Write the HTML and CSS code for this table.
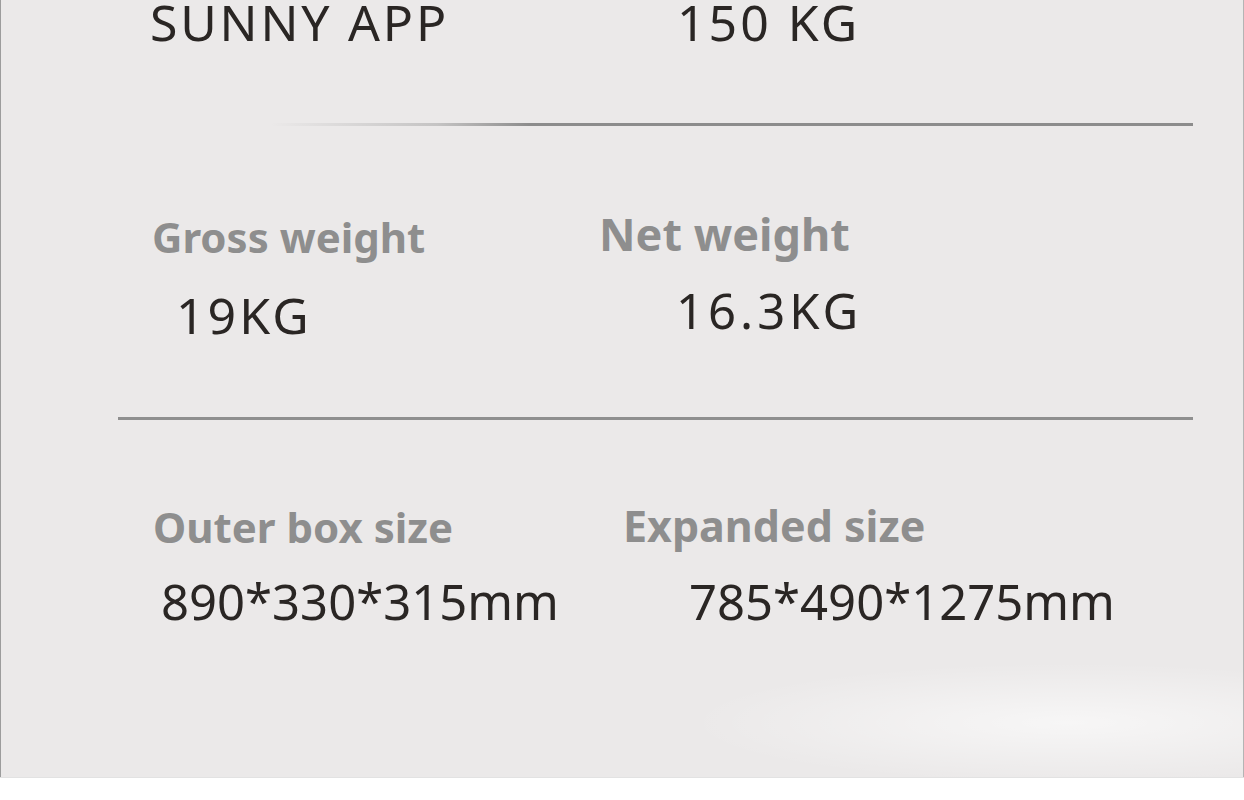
FILE: index.html
```html
<!DOCTYPE html>
<html lang="en">
<head>
    <meta charset="UTF-8">
    <meta name="viewport" content="width=device-width, initial-scale=1.0">
    <title>Sunny App - Specs</title>
    <link rel="stylesheet" href="styles.css">
</head>
<body>

    <div class="poster">
        <!-- brand / load -->
        <section class="row row-top">
            <div class="cell">
                <div class="value brand">SUNNY APP</div>
            </div>
            <div class="cell">
                <div class="value load">150 KG</div>
            </div>
        </section>

        <div class="rule rule-fade"></div>

        <!-- weights -->
        <section class="row row-weight">
            <div class="cell">
                <div class="label gross">Gross weight</div>
                <div class="value gross-val">19KG</div>
            </div>
            <div class="cell">
                <div class="label net">Net weight</div>
                <div class="value net-val">16.3KG</div>
            </div>
        </section>

        <div class="rule rule-full"></div>

        <!-- sizes -->
        <section class="row row-size">
            <div class="cell">
                <div class="label outer">Outer box size</div>
                <div class="value outer-val">890*330*315mm</div>
            </div>
            <div class="cell">
                <div class="label expanded">Expanded size</div>
                <div class="value expanded-val">785*490*1275mm</div>
            </div>
        </section>
    </div>
    <div class="footer"></div>

</body>
</html>
```

FILE: styles.css
```css
body {
    margin: 0;
    background: #ffffff;
    font-family: "Noto Sans", "Open Sans", sans-serif;
    overflow: hidden;
}

.poster {
    height: 777px;
    box-sizing: border-box;
    border-left: 1px solid #9c9c9c;
    border-right: 1px solid #b4b4b4;
    background:
        radial-gradient(ellipse 380px 60px at 86% 93%, rgba(255, 255, 255, 0.6), rgba(255, 255, 255, 0) 100%),
        #ebe9e9;
    overflow: hidden;
}

.footer {
    height: 23px;
    background: #ffffff;
    border-top: 1px solid #e2e2e2;
}

/* filas de dos columnas */
.row {
    display: grid;
    grid-template-columns: 448px 1fr;
    padding-left: 147px;
    align-items: start;
}
.row-weight { margin-top: 85px; }
.row-size { margin-top: 85px; }

.label {
    font-weight: 700;
    color: #8e8e8e;
    font-size: 42px;
    line-height: 1;
}
.value {
    color: #2a2624;
    font-size: 49px;
    line-height: 1;
}

.brand { font-size: 50px; line-height: 0.9; letter-spacing: 2.8px; margin-left: 2px; }
.load { font-size: 50px; line-height: 0.9; letter-spacing: 3px; margin-left: 81px; }

.gross { margin-top: 5px; margin-left: 4px; }
.gross-val { font-size: 50px; letter-spacing: 3px; margin-top: 32px; margin-left: 28px; }
.net { font-size: 45px; margin-left: 3px; }
.net-val { letter-spacing: 4px; margin-top: 30px; margin-left: 80px; }

.outer { margin-top: 1px; margin-left: 5px; }
.outer-val { margin-top: 29px; margin-left: 13px; }
.expanded { font-size: 43px; margin-top: -1px; margin-left: 27px; }
.expanded-val { margin-top: 30px; margin-left: 93px; }

/* líneas separadoras */
.rule {
    height: 3px;
}
.rule-fade {
    margin-top: 78px;
    margin-left: 270px;
    width: 922px;
    background: linear-gradient(to right, rgba(140, 140, 140, 0) 0%, rgba(150, 150, 150, 0.45) 18%, #8c8c8c 28%, #8c8c8c 100%);
}
.rule-full {
    margin-top: 77px;
    margin-left: 117px;
    width: 1075px;
    background: #8f8f8f;
}
```
